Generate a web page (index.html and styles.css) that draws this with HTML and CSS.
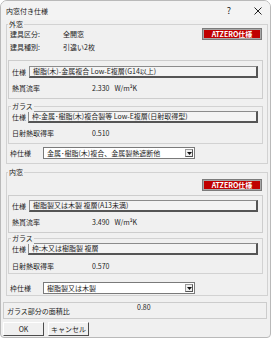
FILE: index.html
```html
<!DOCTYPE html>
<html lang="ja">
<head>
<meta charset="utf-8">
<title>内窓付き仕様</title>
<link rel="stylesheet" href="styles.css">
</head>
<body>
<div class="window">
  <div class="titlebar">
    <span class="title">内窓付き仕様</span>
    <span class="help">?</span>
    <span class="close"><svg width="8" height="8" viewBox="0 0 8 8"><path d="M0.5 0.5 L7.5 7.5 M7.5 0.5 L0.5 7.5" stroke="#222" stroke-width="1" fill="none"/></svg></span>
  </div>

  <div class="group outer first">
    <span class="legend">外窓</span>
    <div class="row r1"><span class="lbl w53">建具区分:</span><span>全開窓</span><span class="atz">ATZERO仕様</span></div>
    <div class="row r2"><span class="lbl w53">建具種別:</span><span>引違い2枚</span></div>
    <div class="panel p1">
      <div class="frow"><span class="lbl w17">仕様</span><div class="field">樹脂(木)-金属複合 Low-E複層(G14以上)</div></div>
      <div class="row vrow"><span class="lbl w80">熱貫流率</span><span>2.330</span><span class="unit">W/m²K</span></div>
    </div>
    <div class="group glass g1">
      <span class="legend">ガラス</span>
      <div class="frow"><span class="lbl w16">仕様</span><div class="field">枠:金属･樹脂(木)複合製等 Low-E複層(日射取得型)</div></div>
      <div class="row vrow"><span class="lbl w80">日射熱取得率</span><span>0.510</span></div>
    </div>
    <div class="row crow c1"><span class="lbl w33">枠仕様</span><div class="combo"><span class="ctext">金属･樹脂(木)複合、金属製熱遮断他</span><span class="drop"><svg width="5" height="3" viewBox="0 0 5 3"><path d="M0 0 H5 L2.5 3 Z" fill="#111"/></svg></span></div></div>
  </div>

  <div class="group outer second">
    <span class="legend">内窓</span>
    <div class="row r3"><span class="atz">ATZERO仕様</span></div>
    <div class="panel p2">
      <div class="frow"><span class="lbl w17">仕様</span><div class="field">樹脂製又は木製 複層(A13未満)</div></div>
      <div class="row vrow"><span class="lbl w80">熱貫流率</span><span>3.490</span><span class="unit">W/m²K</span></div>
    </div>
    <div class="group glass g2">
      <span class="legend">ガラス</span>
      <div class="frow"><span class="lbl w16">仕様</span><div class="field">枠:木又は樹脂製 複層</div></div>
      <div class="row vrow v2"><span class="lbl w80">日射熱取得率</span><span>0.570</span></div>
    </div>
    <div class="row crow c2"><span class="lbl w33">枠仕様</span><div class="combo"><span class="ctext">樹脂製又は木製</span><span class="drop"><svg width="5" height="3" viewBox="0 0 5 3"><path d="M0 0 H5 L2.5 3 Z" fill="#111"/></svg></span></div></div>
  </div>

  <div class="ratio">
    <span class="rlabel">ガラス部分の面積比</span>
    <span class="rvalue">0.80</span>
  </div>

  <div class="buttons">
    <span class="btn">OK</span>
    <span class="btn">キャンセル</span>
  </div>
</div>
</body>
</html>
```

FILE: styles.css
```css
html, body {
  margin: 0;
  padding: 0;
  background: #ffffff;
}

.window {
  width: 271px;
  height: 338px;
  box-sizing: border-box;
  border: 1px solid #b9b9b9;
  border-radius: 7px 7px 4px 4px;
  background: #f0f0f0;
  font-family: "Noto Sans CJK JP", "Noto Sans", sans-serif;
  font-size: 7px;
  line-height: 12px;
  color: #1c1c1c;
  overflow: hidden;
}

.titlebar {
  height: 19px;
  display: flex;
  align-items: center;
  padding-left: 5px;
  background: #f3f3f3;
}

.title {
  flex: 1;
  font-size: 7px;
  color: #222;
}

.help {
  width: 24px;
  text-align: center;
  font-size: 9px;
  margin-right: 5px;
  color: #222;
}

.close {
  width: 24px;
  height: 19px;
  display: flex;
  align-items: center;
  justify-content: center;
}

.group {
  position: relative;
  box-sizing: border-box;
  border: 1px solid #d2d2d2;
}

.legend {
  position: absolute;
  top: -6px;
  left: 1px;
  padding: 0 1px;
  line-height: 11px;
  background: #f0f0f0;
  color: #1c1c1c;
}

.outer {
  width: 262px;
  margin-left: 5px;
  padding: 3px 4px 4px 1px;
}

.first {
  margin-top: 4px;
}

.second {
  margin-top: 8px;
  padding-bottom: 1px;
}

.row {
  display: flex;
  align-items: center;
  height: 12px;
  padding-left: 2px;
}

.r2 {
  margin-top: 1px;
}

.r3 {
  margin-top: 3px;
}

.lbl {
  flex: none;
}

.w53 { width: 53px; }
.w17 { width: 17px; }
.w16 { width: 16px; }
.w80 { width: 80px; }
.w33 { width: 33px; }

.atz {
  margin-left: auto;
  margin-right: 1px;
  width: 60px;
  height: 12px;
  box-sizing: border-box;
  border: 1px solid #7b7b7b;
  box-shadow: inset 0 0 0 1px #a8a8a8;
  background: #c00000;
  color: #ffffff;
  font-weight: bold;
  font-size: 7px;
  line-height: 10px;
  text-align: center;
}

.panel {
  box-sizing: border-box;
  width: 255px;
  border: 1px solid #cdcdcd;
  padding: 5px 4px 4px 3px;
}

.p1 {
  margin-top: 7px;
}

.p2 {
  margin-top: 4px;
  padding-top: 4px;
}

.panel .row,
.glass .row {
  padding-left: 0;
}

.frow {
  display: flex;
  align-items: center;
  height: 12px;
}

.field {
  flex: 1;
  height: 12px;
  box-sizing: border-box;
  border: 1px solid #8c8c8c;
  border-right: 2px solid #555555;
  border-bottom: 2px solid #555555;
  background: #f4f4f4;
  padding-left: 3px;
  line-height: 9px;
  white-space: nowrap;
  overflow: hidden;
}

.vrow {
  margin-top: 4px;
}

.v2 {
  margin-top: 5px;
}

.unit {
  margin-left: 5px;
}

.glass {
  width: 255px;
  padding: 4px 4px 4px 3px;
}

.g1 {
  margin-top: 7px;
}

.g2 {
  margin-top: 5px;
  padding-bottom: 1px;
}

.glass .legend {
  left: 2px;
}

.crow {
  height: 12px;
}

.c1 {
  margin-top: 3px;
}

.c2 {
  margin-top: 8px;
}

.combo {
  width: 152px;
  height: 12px;
  box-sizing: border-box;
  border: 1px solid #7a7a7a;
  background: #ffffff;
  display: flex;
  align-items: center;
  padding-left: 3px;
  padding-right: 1px;
}

.ctext {
  flex: 1;
  line-height: 10px;
  white-space: nowrap;
  overflow: hidden;
}

.drop {
  width: 8px;
  height: 8px;
  box-sizing: border-box;
  border: 1px solid #9a9a9a;
  border-right-color: #555;
  border-bottom-color: #555;
  background: #f0f0f0;
  display: flex;
  align-items: center;
  justify-content: center;
}

.ratio {
  margin: 6px 0 0 2px;
  width: 264px;
  height: 17px;
  box-sizing: border-box;
  border: 1px solid #cccccc;
  display: flex;
  align-items: flex-start;
  padding-left: 3px;
}

.rlabel {
  width: 130px;
  margin-top: 2px;
  line-height: 12px;
}

.rvalue {
  line-height: 9px;
}

.buttons {
  display: flex;
  gap: 4px;
  margin: 3px 0 0 2px;
}

.btn {
  width: 41px;
  height: 14px;
  box-sizing: border-box;
  border: 1px solid #ffffff;
  border-right-color: #4c4c4c;
  border-bottom-color: #4c4c4c;
  background: #f0f0f0;
  text-align: center;
  line-height: 12px;
}
```
